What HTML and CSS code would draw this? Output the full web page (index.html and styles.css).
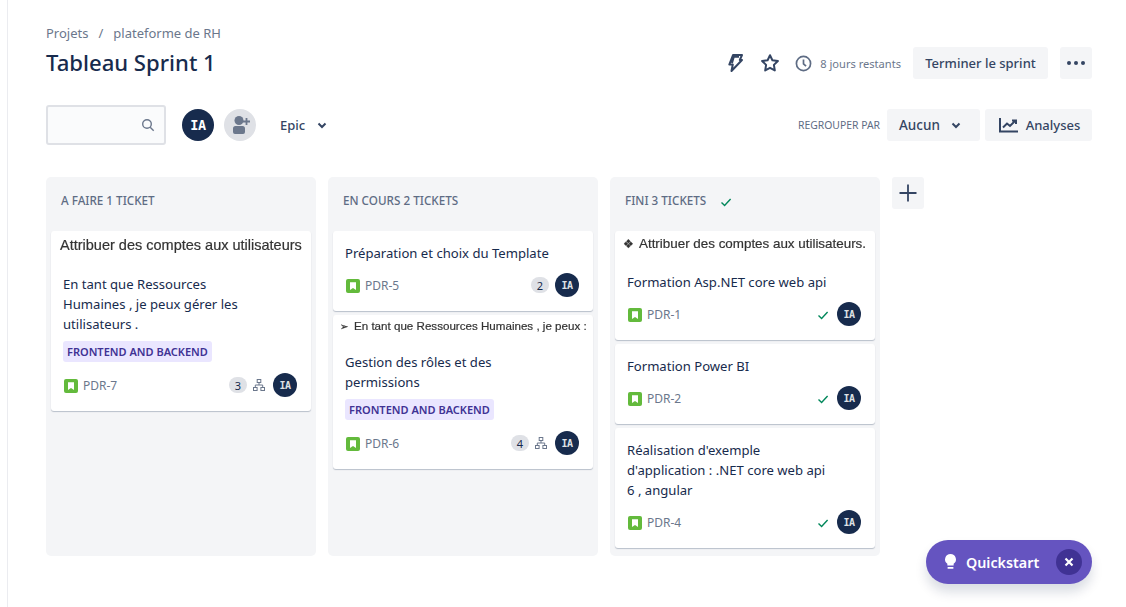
FILE: index.html
```html
<!DOCTYPE html>
<html lang="fr">
<head>
<meta charset="utf-8">
<title>Tableau Sprint 1</title>
<link rel="stylesheet" href="styles.css">
</head>
<body>
<svg class="sprites" width="0" height="0" aria-hidden="true">
  <symbol id="story" viewBox="0 0 14 14"><rect width="14" height="14" rx="2" fill="#63ba3c"/><path d="M4 3.200h6v7.800L7 8.900 4 11z" fill="#fff"/></symbol>
  <symbol id="check" viewBox="0 0 12 12"><path d="M1.500 6.500 4.600 9.400 10.600 3" fill="none" stroke="#00875a" stroke-width="1.400"/></symbol>
  <symbol id="tree" viewBox="0 0 12 12"><g fill="none" stroke="#6b778c" stroke-width="1"><rect x="4.200" y=".5" width="3.600" height="3"/><rect x=".5" y="8.500" width="3.600" height="3"/><rect x="7.900" y="8.500" width="3.600" height="3"/><path d="M6 3.500v2.500M2.300 8.500V6h7.400v2.500"/></g></symbol>
  <symbol id="chev" viewBox="0 0 12 12"><path d="M2.500 4.500 6 8l3.500-3.500" fill="none" stroke="#344563" stroke-width="2"/></symbol>
</svg>
<main class="page">
  <nav class="crumbs"><span>Projets</span><span class="sep">/</span><span>plateforme de RH</span></nav>
  <header class="head">
    <h1>Tableau Sprint 1</h1>
    <div class="head-actions">
      <svg class="ico bolt" viewBox="0 0 20 20"><path d="M8 2h9l-2.200 5H17L6.500 18l1.300-6.500H4.300z M7 10l1.800-6.200h5.200" fill="none" stroke="#344563" stroke-width="2" stroke-linejoin="round"/></svg>
      <svg class="ico star" viewBox="0 0 20 20"><path d="m10 2.200 2.400 5 5.500.8-4 3.900.9 5.500-4.800-2.600-4.800 2.600.9-5.500-4-3.900 5.500-.8z" fill="none" stroke="#344563" stroke-width="2" stroke-linejoin="round"/></svg>
      <div class="remain">
        <svg class="ico clock" viewBox="0 0 18 18"><circle cx="9" cy="9" r="7.500" fill="none" stroke="#5e6c84" stroke-width="1.800"/><path d="M9 4.800V9.300l2.700 2.500" fill="none" stroke="#5e6c84" stroke-width="1.800"/></svg>
        <span>8 jours restants</span>
      </div>
      <button class="btn finish">Terminer le sprint</button>
      <button class="btn more" aria-label="Plus"><i></i><i></i><i></i></button>
    </div>
  </header>
  <div class="toolbar">
    <div class="search"><svg viewBox="0 0 14 14" width="14" height="14"><circle cx="6" cy="6" r="4.300" fill="none" stroke="#6b778c" stroke-width="1.400"/><path d="m9.200 9.200 3.500 3.500" stroke="#6b778c" stroke-width="1.400"/></svg></div>
    <span class="avatar big">IA</span>
    <span class="add-user"><svg viewBox="0 0 20 20" width="20" height="20"><circle cx="9" cy="5.500" r="4.500" fill="#6b778c"/><path d="M3 13.500a2.500 2.500 0 0 1 2.500-2.500h7a2.500 2.500 0 0 1 2.500 2.500V17a2 2 0 0 1-2 2H5a2 2 0 0 1-2-2z" fill="#6b778c"/><path d="M16.500 3v7M13 6.500h7" stroke="#6b778c" stroke-width="1.800"/></svg></span>
    <span class="epic">Epic<svg width="12" height="12"><use href="#chev"/></svg></span>
    <div class="toolbar-right">
      <span class="group-label">REGROUPER PAR</span>
      <button class="btn none">Aucun<svg width="12" height="12"><use href="#chev"/></svg></button>
      <button class="btn insights"><svg viewBox="0 0 20 16" width="20" height="16"><path d="M1 1v13.500h18" fill="none" stroke="#344563" stroke-width="2"/><path d="M4 10.500 8 6.500l3 2.500 5-5M13 3.500h4V7" fill="none" stroke="#344563" stroke-width="2"/></svg>Analyses</button>
    </div>
  </div>
  <section class="board">
    <div class="column">
      <h2 class="col-title">A FAIRE 1 TICKET</h2>
      <article class="card">
        <p class="paste paste-a">Attribuer des comptes aux utilisateurs</p>
        <p class="title">En tant que Ressources<br>Humaines , je peux gérer les<br>utilisateurs .</p>
        <span class="tag">FRONTEND AND BACKEND</span>
        <div class="meta"><svg class="story"><use href="#story"/></svg><span class="key">PDR-7</span><span class="count">3</span><svg class="tree"><use href="#tree"/></svg><span class="avatar">IA</span></div>
      </article>
    </div>
    <div class="column">
      <h2 class="col-title">EN COURS 2 TICKETS</h2>
      <article class="card">
        <p class="title">Préparation et choix du Template</p>
        <div class="meta"><svg class="story"><use href="#story"/></svg><span class="key">PDR-5</span><span class="count">2</span><span class="avatar">IA</span></div>
      </article>
      <article class="card">
        <p class="paste paste-b"><span class="bullet">➢</span>En tant que Ressources Humaines , je peux :</p>
        <p class="title">Gestion des rôles et des<br>permissions</p>
        <span class="tag">FRONTEND AND BACKEND</span>
        <div class="meta"><svg class="story"><use href="#story"/></svg><span class="key">PDR-6</span><span class="count">4</span><svg class="tree"><use href="#tree"/></svg><span class="avatar">IA</span></div>
      </article>
    </div>
    <div class="column">
      <h2 class="col-title">FINI 3 TICKETS<svg class="col-check"><use href="#check"/></svg></h2>
      <article class="card">
        <p class="paste paste-c"><span class="bullet">❖</span>Attribuer des comptes aux utilisateurs.</p>
        <p class="title">Formation Asp.NET core web api</p>
        <div class="meta"><svg class="story"><use href="#story"/></svg><span class="key">PDR-1</span><svg class="done"><use href="#check"/></svg><span class="avatar">IA</span></div>
      </article>
      <article class="card">
        <p class="title">Formation Power BI</p>
        <div class="meta"><svg class="story"><use href="#story"/></svg><span class="key">PDR-2</span><svg class="done"><use href="#check"/></svg><span class="avatar">IA</span></div>
      </article>
      <article class="card">
        <p class="title">Réalisation d'exemple<br>d'application : .NET core web api<br>6 , angular</p>
        <div class="meta"><svg class="story"><use href="#story"/></svg><span class="key">PDR-4</span><svg class="done"><use href="#check"/></svg><span class="avatar">IA</span></div>
      </article>
    </div>
    <button class="btn add-col" aria-label="Ajouter"><svg viewBox="0 0 20 20" width="20" height="20"><path d="M10 1.500v17M1.500 10h17" stroke="#344563" stroke-width="1.800"/></svg></button>
  </section>
</main>
<div class="quickstart">
  <svg viewBox="0 0 16 20" width="15" height="18"><path d="M8 1a6 6 0 0 0-3.500 10.900V14h7v-2.100A6 6 0 0 0 8 1zM4.800 15.500h6.400V17.500H4.800z" fill="#fff"/></svg>
  <span>Quickstart</span>
  <span class="qs-close"><svg viewBox="0 0 10 10" width="10" height="10"><path d="m1.500 1.500 7 7M8.500 1.500l-7 7" stroke="#fff" stroke-width="2.200"/></svg></span>
</div>
</body>
</html>
```
FILE: styles.css
```css
* { box-sizing: border-box; }
html, body { margin: 0; height: 100%; }
body {
  font-family: "Noto Sans", "Open Sans", sans-serif;
  color: #172b4d;
  background: #fff;
  overflow: hidden;
  font-size: 13px;
}
.sprites { position: absolute; }
.page {
  margin-left: 7px;
  border-left: 1px solid #ebecf0;
  height: 607px;
  padding: 24px 34px 0 38px;
}
.crumbs {
  display: flex;
  gap: 10px;
  color: #6b778c;
  font-size: 13px;
  line-height: 18px;
}
.head {
  display: flex;
  align-items: center;
  justify-content: space-between;
  height: 32px;
  margin-top: 5px;
}
h1 { margin: -3px 0 0; font-size: 22.1px; font-weight: 500; line-height: 32px; }
.head-actions { display: flex; align-items: center; }
.ico { display: block; }
.bolt { width: 20px; height: 20px; margin-right: 15px; }
.star { width: 20px; height: 20px; margin-right: 15px; }
.clock { width: 17px; height: 17px; }
.remain { display: flex; align-items: center; gap: 8px; color: #6b778c; font-size: 11.1px; margin-right: 12px; }
.btn {
  font: inherit;
  font-weight: 500;
  border: 0;
  border-radius: 3px;
  background: #f4f5f7;
  color: #344563;
  height: 32px;
  padding: 0;
  display: flex;
  align-items: center;
  justify-content: center;
}
.finish { width: 135px; }
.more { width: 32px; gap: 3px; margin-left: 12px; }
.more i { width: 4px; height: 4px; border-radius: 50%; background: #344563; }
.toolbar { display: flex; align-items: center; margin-top: 26px; height: 40px; }
.search {
  width: 120px;
  height: 40px;
  border: 2px solid #dfe1e6;
  border-radius: 3px;
  background: #fafbfc;
  display: flex;
  align-items: center;
  justify-content: flex-end;
  padding-right: 9px;
}
.avatar {
  width: 24px;
  height: 24px;
  border-radius: 50%;
  background: #172b4d;
  color: #dfe1e6;
  display: flex;
  align-items: center;
  justify-content: center;
  font-family: "DejaVu Sans Mono", monospace;
  font-size: 10px;
  font-weight: 700;
  letter-spacing: -.5px;
  flex: none;
}
.avatar.big { width: 32px; height: 32px; font-size: 13.5px; letter-spacing: -.5px; margin-left: 16px; color: #fff; }
.add-user {
  width: 32px;
  height: 32px;
  border-radius: 50%;
  background: #dfe1e6;
  margin-left: 10px;
  display: flex;
  align-items: center;
  justify-content: center;
}
.epic { display: flex; align-items: center; gap: 11px; font-weight: 500; color: #344563; margin-left: 24px; font-size: 13px; }
.toolbar-right { margin-left: auto; display: flex; align-items: center; }
.group-label { font-size: 10.4px; color: #5e6c84; margin-right: 7px; }
.none { width: 93px; gap: 10px; justify-content: flex-start; padding-left: 12px; font-size: 13.5px; }
.insights { width: 107px; gap: 7px; margin-left: 5px; padding-left: 2px; }
.board { display: flex; align-items: flex-start; gap: 12px; margin-top: 32px; }
.column {
  width: 270px;
  height: 379px;
  background: #f4f5f7;
  border-radius: 5px;
  padding: 0 5px;
  display: flex;
  flex-direction: column;
  gap: 4px;
}
.col-title {
  margin: 0;
  height: 50px;
  flex: none;
  padding: 14px 10px 0;
  font-size: 11.7px;
  font-weight: 500;
  line-height: 18px;
  color: #5e6c84;
  display: flex;
  align-items: flex-start;
}
.col-check { width: 12px; height: 12px; margin: 5px 0 0 14px; }
.card {
  background: #fff;
  border-radius: 3px;
  box-shadow: 0 1px 1px rgba(9, 30, 66, .25);
  padding: 12px 14px 14px 12px;
  display: flex;
  flex-direction: column;
  align-items: flex-start;
  flex: none;
}
.card:has(.paste) { padding-top: 0; }
.paste {
  margin: 0;
  font-family: "Liberation Sans", Arial, sans-serif;
  line-height: 18px;
  color: #333;
  white-space: nowrap;
  -webkit-text-stroke: .2px #333;
  filter: blur(.5px);
}
.paste-a { font-size: 14.5px; margin: 5px 0 20px -3px; }
.paste-b { font-size: 11.6px; margin: 2px 0 16px -5px; }
.paste-c { font-size: 13.4px; margin: 4px 0 19px -4px; }
.bullet { display: inline-block; font-family: "DejaVu Sans", sans-serif; }
.paste-b .bullet { width: 14px; font-size: 10px; }
.paste-c .bullet { width: 16px; font-size: 12px; }
.title { margin: 0; font-size: 13.1px; line-height: 20px; }
.tag {
  margin-top: 7px;
  background: #eae6ff;
  color: #403294;
  border-radius: 3px;
  font-size: 11px;
  font-weight: 600;
  line-height: 21px;
  padding: 0 4px;
}
.meta { display: flex; align-items: center; width: 100%; margin-top: 10px; height: 24px; }
.tag + .meta { margin-top: 11px; }
.story { width: 14px; height: 14px; margin: 2px 5px 0 1px; flex: none; }
.key { color: #6b778c; font-size: 12px; margin-right: auto; }
.count {
  min-width: 18px;
  height: 16px;
  border-radius: 8px;
  background: #dfe1e6;
  font-size: 11px;
  display: flex;
  align-items: center;
  justify-content: center;
  margin-right: 6px;
}
.tree { width: 12px; height: 12px; margin-right: 8px; }
.done { width: 12px; height: 12px; margin: 2px 8px 0 0; }
.add-col { width: 32px; height: 32px; }
.quickstart {
  position: absolute;
  left: 926px;
  top: 540px;
  width: 166px;
  height: 44px;
  border-radius: 22px;
  background: #6554c0;
  color: #fff;
  font-weight: 600;
  font-size: 14.3px;
  display: flex;
  align-items: center;
  padding-left: 17px;
  gap: 8px;
  box-shadow: 0 8px 12px rgba(9, 30, 66, .15);
}
.qs-close {
  position: absolute;
  right: 10px;
  top: 9px;
  width: 26px;
  height: 26px;
  border-radius: 50%;
  background: #403294;
  display: flex;
  align-items: center;
  justify-content: center;
}
```
